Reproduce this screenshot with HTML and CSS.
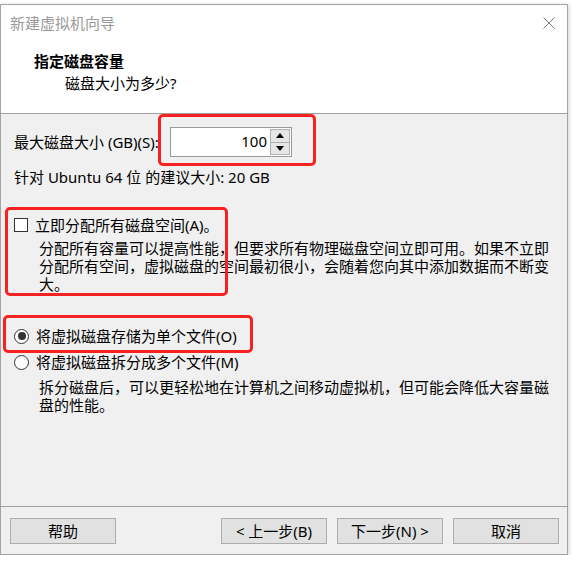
FILE: index.html
```html
<!DOCTYPE html>
<html lang="zh-CN">
<head>
    <meta charset="UTF-8">
    <title>新建虚拟机向导</title>
    <link rel="stylesheet" href="styles.css">
</head>
<body>
    <div class="window">
        <!-- Title bar -->
        <div class="titlebar">
            <span class="title">新建虚拟机向导</span>
            <svg class="close" width="12" height="12" viewBox="0 0 12 12">
                <path d="M0.5 0.5 L11.5 11.5 M11.5 0.5 L0.5 11.5" stroke="#7a7a7a" stroke-width="1" fill="none"/>
            </svg>
        </div>

        <!-- Page header -->
        <div class="header">
            <div class="heading">指定磁盘容量</div>
            <div class="subheading">磁盘大小为多少?</div>
        </div>

        <!-- Wizard page -->
        <div class="content">
            <div class="size-row">
                <label class="size-label">最大磁盘大小 (GB)(S):</label>
                <div class="spin-box">
                    <span class="spin-value">100</span>
                    <div class="spin-buttons">
                        <div class="spin-btn">
                            <svg width="8" height="5" viewBox="0 0 8 5"><path d="M4 0 L8 5 L0 5 Z" fill="#000"/></svg>
                        </div>
                        <div class="spin-btn">
                            <svg width="8" height="5" viewBox="0 0 8 5"><path d="M0 0 L8 0 L4 5 Z" fill="#000"/></svg>
                        </div>
                    </div>
                </div>
            </div>

            <div class="hint">针对 Ubuntu 64 位 的建议大小: 20 GB</div>

            <div class="option check-option">
                <span class="checkbox"></span>
                <span>立即分配所有磁盘空间(A)。</span>
            </div>
            <p class="desc">分配所有容量可以提高性能，但要求所有物理磁盘空间立即可用。如果不立即分配所有空间，虚拟磁盘的空间最初很小，会随着您向其中添加数据而不断变大。</p>

            <div class="option radio-first">
                <span class="radio checked"></span>
                <span>将虚拟磁盘存储为单个文件(O)</span>
            </div>
            <div class="option radio-second">
                <span class="radio"></span>
                <span>将虚拟磁盘拆分成多个文件(M)</span>
            </div>
            <p class="desc desc-split">拆分磁盘后，可以更轻松地在计算机之间移动虚拟机，但可能会降低大容量磁盘的性能。</p>
        </div>

        <!-- Buttons -->
        <div class="footer">
            <button class="btn">帮助</button>
            <div class="btn-group">
                <button class="btn">&lt; 上一步(B)</button>
                <button class="btn">下一步(N) &gt;</button>
                <button class="btn">取消</button>
            </div>
        </div>

        <!-- Red annotation boxes -->
        <div class="mark mark-size"></div>
        <div class="mark mark-alloc"></div>
        <div class="mark mark-single"></div>
    </div>
</body>
</html>
```

FILE: styles.css
```css
body {
    margin: 0;
    background-color: #fff;
    font-family: "Noto Sans", "Noto Sans CJK SC", sans-serif;
    font-size: 15px;
    line-height: 18px;
    color: #000;
}

.window {
    position: relative;
    box-sizing: border-box;
    width: 568px;
    height: 551px;
    margin-top: 4px;
    border: 1px solid #a3a3a3;
    background-color: #f0f0f0;
    box-shadow: 1px 1px 4px rgba(0, 0, 0, 0.18);
    display: flex;
    flex-direction: column;
}

.titlebar {
    height: 36px;
    padding: 0 12px 0 9px;
    display: flex;
    align-items: center;
    justify-content: space-between;
    background-color: #fff;
}

.title {
    color: #9a9a9a;
}

.header {
    height: 73px;
    padding-top: 11px;
    box-sizing: border-box;
    background-color: #fff;
    border-bottom: 1px solid #a0a0a0;
}

.heading {
    padding-left: 33px;
    font-weight: bold;
}

.subheading {
    margin-top: 4px;
    padding-left: 64px;
}

.content {
    flex: 1;
    padding: 13px 13px 0 13px;
}

.size-row {
    display: flex;
    align-items: center;
}

.size-label {
    width: 156px;
}

.spin-box {
    box-sizing: border-box;
    width: 122px;
    height: 30px;
    border: 1px solid #9a9a9a;
    background-color: #fff;
    display: flex;
}

.spin-value {
    flex: 1;
    text-align: right;
    padding-right: 3px;
    line-height: 27px;
}

.spin-buttons {
    width: 20px;
    padding: 1px 1px 1px 0;
    display: flex;
    flex-direction: column;
}

.spin-btn {
    flex: 1;
    box-sizing: border-box;
    border: 1px solid #b0b0b0;
    background-color: #e6e6e6;
    display: flex;
    align-items: center;
    justify-content: center;
}

.spin-btn + .spin-btn {
    border-top: none;
}

.hint {
    margin-top: 11px;
}

.option {
    display: flex;
    align-items: center;
    gap: 7px;
}

.check-option {
    margin-top: 30px;
}

.radio-first {
    margin-top: 34px;
}

.radio-second {
    margin-top: 8px;
}

.checkbox {
    box-sizing: border-box;
    width: 14px;
    height: 14px;
    border: 1px solid #333;
    background-color: #fff;
}

.radio {
    box-sizing: border-box;
    width: 15px;
    height: 15px;
    border: 1px solid #333;
    border-radius: 50%;
    background-color: #fff;
    display: flex;
    align-items: center;
    justify-content: center;
}

.radio.checked::after {
    content: "";
    width: 8px;
    height: 8px;
    border-radius: 50%;
    background-color: #333;
}

.desc {
    margin: 5px 0 0 0;
    padding-left: 25px;
    width: 512px;
}

.desc-split {
    margin-top: 7px;
}

.footer {
    height: 48px;
    box-sizing: border-box;
    border-top: 1px solid #a0a0a0;
    padding: 11px 8px 0 9px;
    display: flex;
    justify-content: space-between;
    align-items: flex-start;
}

.btn-group {
    display: flex;
    gap: 10px;
}

.btn {
    box-sizing: border-box;
    width: 106px;
    height: 26px;
    padding: 0;
    border: 1px solid #adadad;
    background-color: #e1e1e1;
    font-family: inherit;
    font-size: 15px;
    line-height: 18px;
    color: #000;
}

.mark {
    position: absolute;
    box-sizing: border-box;
    border: 3px solid #f62222;
    border-radius: 5px;
}

.mark-size {
    left: 157px;
    top: 109px;
    width: 158px;
    height: 52px;
}

.mark-alloc {
    left: 4px;
    top: 202px;
    width: 223px;
    height: 89px;
}

.mark-single {
    left: 2px;
    top: 310px;
    width: 250px;
    height: 38px;
}
```
